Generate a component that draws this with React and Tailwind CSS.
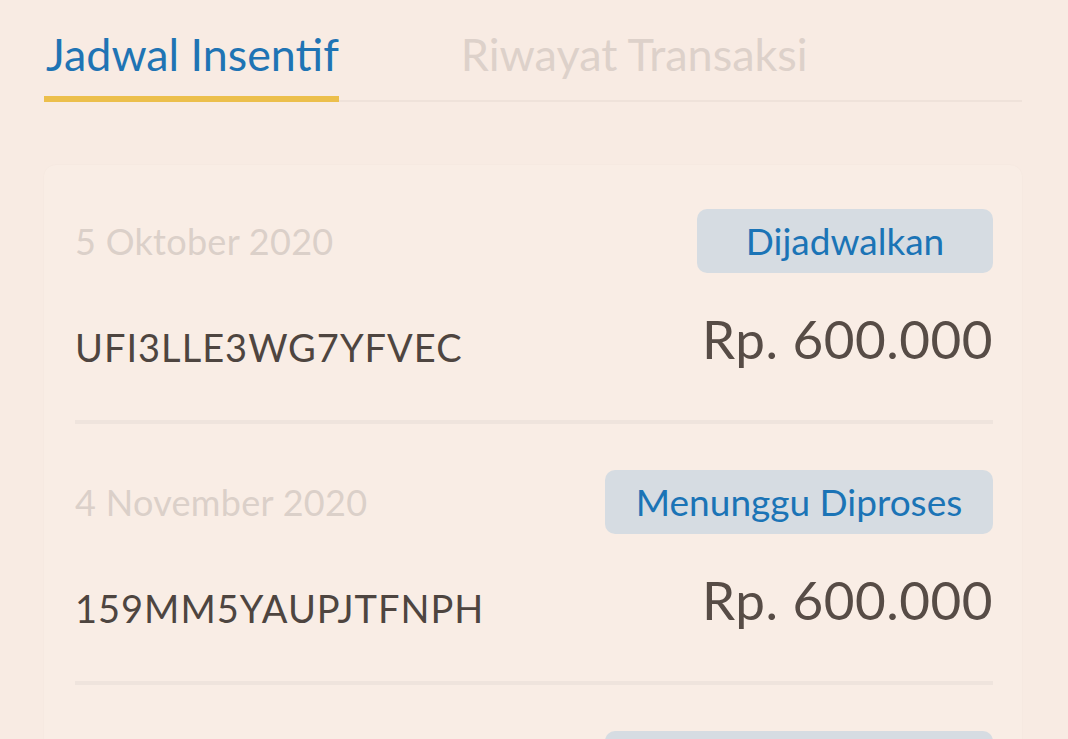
import React from 'react';

const items = [
    { date: '5 Oktober 2020', status: 'Dijadwalkan', badgeW: 'w-[296px]', code: 'UFI3LLE3WG7YFVEC', amount: 'Rp. 600.000' },
    { date: '4 November 2020', status: 'Menunggu Diproses', badgeW: 'w-[388px]', code: '159MM5YAUPJTFNPH', amount: 'Rp. 600.000' },
];

const App = () => {
    return (
        <div className="h-screen bg-[#f8ebe3] px-[44px] pt-[28px] overflow-hidden" style={{ fontFamily: 'Lato, "Noto Sans", sans-serif' }}>
            {/* tabs */}
            <div className="flex border-b-[2px] border-[#efe2da] w-[978px]">
                <div className="relative pb-[20px] pl-[2px]">
                    <span className="text-[44.8px] leading-[52px] text-[#1f74b4]">Jadwal Insentif</span>
                    <div className="absolute left-0 right-0 bottom-[-2px] h-[6px] bg-[#ecbf4c]" />
                </div>
                <div className="pl-[122px] pb-[20px]">
                    <span className="text-[45px] leading-[52px] text-[#ddd1ca]">Riwayat Transaksi</span>
                </div>
            </div>

            {/* list card */}
            <div className="mt-[63px] w-[978px] bg-[#f9ede5] rounded-[12px] pl-[31px] pr-[29px] pt-[44px] shadow-[0_0_2px_rgba(0,0,0,0.03)]">
                {items.map((item, i) => (
                    <div key={i} className="border-b-[4px] border-[#efe4dd] pb-[51px] mb-[46px]">
                        <div className="flex justify-between items-center">
                            <div className="text-[36px] text-[#dbd0c9] tracking-[0.3px]">{item.date}</div>
                            <div className={`${item.badgeW} bg-[#d6dce2] rounded-[10px] h-[64px] flex items-center justify-center text-[37px] text-[#1b74b6]`}>
                                {item.status}
                            </div>
                        </div>
                        <div className="flex justify-between items-end mt-[36px]">
                            <div className="text-[38px] leading-[44px] text-[#4e4540] tracking-[1px]">{item.code}</div>
                            <div className="text-[53px] leading-[60px] text-[#574c46] tracking-[0.5px]">{item.amount}</div>
                        </div>
                    </div>
                ))}
                {/* next row, only its badge top peeks in */}
                <div className="flex justify-end">
                    <div className="w-[388px] h-[64px] bg-[#d6dce2] rounded-[10px]" />
                </div>
            </div>
        </div>
    );
};

export default App;
